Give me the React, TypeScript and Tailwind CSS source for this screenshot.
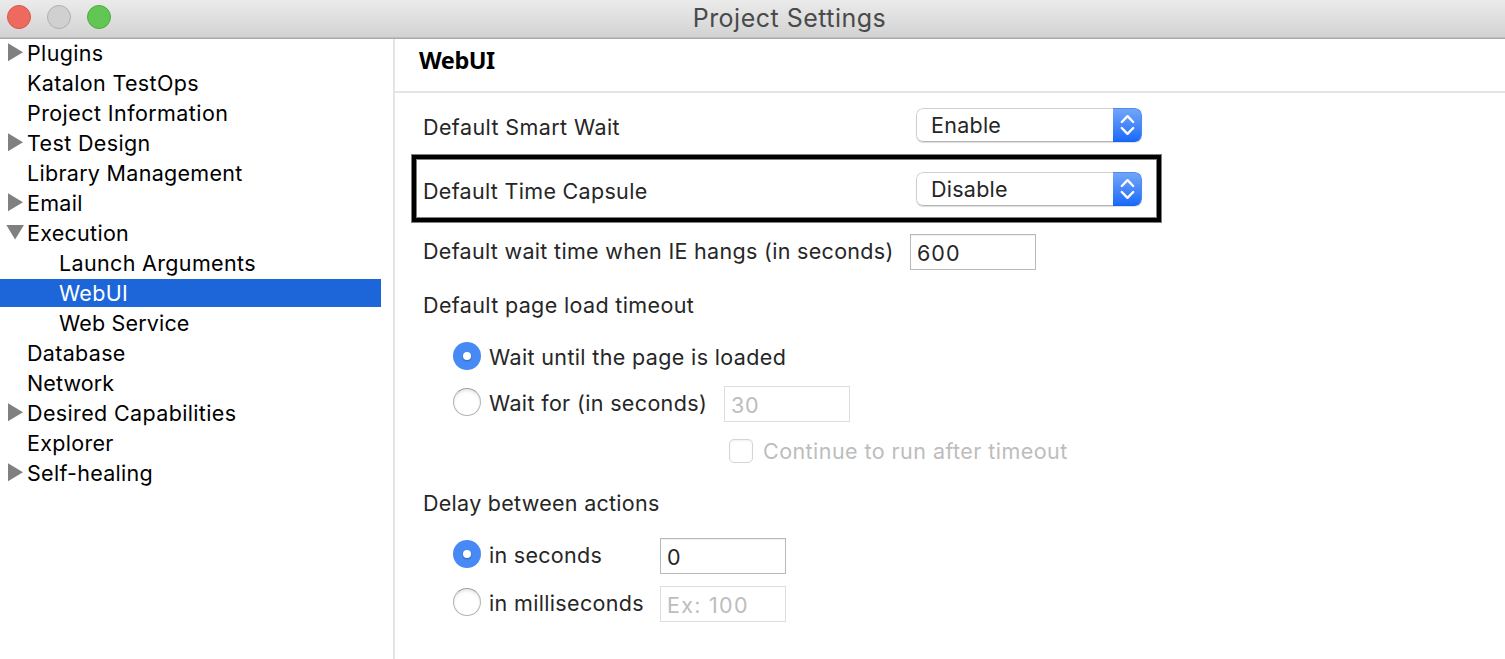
import React from "react";
import clsx from "clsx";

type TreeNode = {
  label: string;
  arrow?: "right" | "down";
  child?: boolean;
  selected?: boolean;
  tracking?: string;
};

const tree: TreeNode[] = [
  { label: "Plugins", arrow: "right", tracking: "tracking-[0.35px]" },
  { label: "Katalon TestOps", tracking: "tracking-[0.35px]" },
  { label: "Project Information", tracking: "tracking-[0.42px]" },
  { label: "Test Design", arrow: "right", tracking: "tracking-[0.36px]" },
  { label: "Library Management", tracking: "tracking-[0.29px]" },
  { label: "Email", arrow: "right" },
  { label: "Execution", arrow: "down", tracking: "tracking-[0.28px]" },
  { label: "Launch Arguments", child: true, tracking: "tracking-[0.34px]" },
  { label: "WebUI", child: true, selected: true },
  { label: "Web Service", child: true, tracking: "tracking-[0.17px]" },
  { label: "Database", tracking: "tracking-[0.32px]" },
  { label: "Network", tracking: "tracking-[0.1px]" },
  { label: "Desired Capabilities", arrow: "right", tracking: "tracking-[0.36px]" },
  { label: "Explorer", tracking: "tracking-[0.3px]" },
  { label: "Self-healing", arrow: "right" },
];

function Arrow({ dir }: { dir?: "right" | "down" }) {
  return (
    <svg className="h-7 w-[27px] shrink-0" viewBox="0 0 27 28" fill="#808080">
      {dir === "right" && <path d="M8 4.2 L23 13.2 L8 22.2 Z" />}
      {dir === "down" && <path d="M6.3 6 H24 L15.1 20.5 Z" />}
    </svg>
  );
}

function TreeRow({ node }: { node: TreeNode }) {
  return (
    <li
      className={clsx(
        "mb-0.5 flex h-7 w-[381px] items-center whitespace-nowrap",
        node.tracking ?? "tracking-[0.28px]",
        node.selected ? "bg-[#1c66da] text-white" : "text-black",
      )}
    >
      <Arrow dir={node.arrow} />
      <span className={clsx(node.child && "ml-8")}>{node.label}</span>
    </li>
  );
}

function Select({ value }: { value: string }) {
  return (
    <div className="flex h-[34px] w-[226px] overflow-hidden rounded-[7px] bg-white shadow-[0_1px_1px_rgba(0,0,0,0.14)]">
      <div className="flex flex-1 items-center rounded-l-[7px] border border-r-0 border-[#cfcfcf] border-b-[#b5b5b5] pl-[14px] tracking-[0.26px]">
        {value}
      </div>
      <div className="w-[29px] rounded-r-[7px] border border-l-0 border-[#4f8af0] border-b-[#1764ef] bg-linear-to-b from-[#72a5f7] to-[#1769fa]">
        <svg className="-mt-px h-[34px] w-[29px]" viewBox="0 0 29 34" fill="none" stroke="white" strokeWidth="2.4" strokeLinecap="round" strokeLinejoin="round">
          <path d="M8.8 14 L14.5 8.2 L20.2 14 M8.8 20 L14.5 25.8 L20.2 20" />
        </svg>
      </div>
    </div>
  );
}

function Field({ value, disabled, className }: { value: string; disabled?: boolean; className?: string }) {
  return (
    <div
      className={clsx(
        "flex h-9 w-[126px] items-center border bg-white pt-[2px] pl-[6px] whitespace-nowrap",
        disabled ? "border-[#dedede] text-[#bdbdbd]" : "border-[#b9b9b9] shadow-[inset_0_1px_0_#f0f0f0]",
        className,
      )}
    >
      {value}
    </div>
  );
}

function Radio({ checked }: { checked?: boolean }) {
  return checked ? (
    <span className="flex size-7 shrink-0 items-center justify-center rounded-full bg-[#478af5]">
      <span className="size-2 rounded-full bg-white shadow-[0_1px_2px_rgba(0,0,0,0.3)]" />
    </span>
  ) : (
    <span className="size-7 shrink-0 rounded-full border border-[#b4b4b4] border-t-[#a0a0a0] bg-white shadow-[inset_0_2px_3px_rgba(0,0,0,0.1)]" />
  );
}

export default function App() {
  return (
    <div className="flex h-[659px] w-[1505px] flex-col overflow-hidden bg-white font-['Inter',sans-serif] text-[21.5px] leading-7 text-[#262626]">
      <header className="relative flex h-[39px] shrink-0 justify-center border-b border-[#a9a9a9] bg-linear-to-b from-[#ebebeb] to-[#d2d2d2] shadow-[inset_0_-1px_0_#c0c0c0]">
        <div className="absolute top-[5px] left-[7px] flex gap-4">
          <span className="size-6 rounded-full border border-[#d8554b] bg-[#ee6a5f]" />
          <span className="size-6 rounded-full border border-[#b0b0b0] bg-[#d0d0d0]" />
          <span className="size-6 rounded-full border border-[#4fa83f] bg-[#62c654]" />
        </div>
        <h1 className="ml-[74px] h-9 text-[25px] leading-9 tracking-[0.49px] text-[#4a4a4a]">Project Settings</h1>
      </header>

      <div className="flex min-h-0 flex-1">
        <ul className="w-[395px] shrink-0 border-r-2 border-[#e4e4e4]">
          {tree.map((node) => (
            <TreeRow key={node.label} node={node} />
          ))}
        </ul>

        <main className="flex-1 whitespace-nowrap">
          <div className="h-[54px] border-b-2 border-[#e4e4e4] pt-[7px] pl-6">
            <h2 className="font-['Noto_Sans',sans-serif] text-[23.5px] leading-7 font-bold tracking-[-0.45px] text-black">WebUI</h2>
          </div>

          <div className="mt-[15px] flex h-[34px] items-center pl-7">
            <span className="w-[493px] pt-1 tracking-[0.41px]">Default Smart Wait</span>
            <Select value="Enable" />
          </div>

          <div className="mt-[13px] ml-[17px] flex h-[67px] w-[749px] border-4 border-black pt-[13px] pl-[7px] shadow-[0_0_0_1px_rgba(0,0,0,0.5),inset_0_0_0_1px_rgba(0,0,0,0.5)]">
            <span className="w-[493px] pt-[5px] tracking-[0.31px]">Default Time Capsule</span>
            <Select value="Disable" />
          </div>

          <div className="mt-3 flex h-9 items-center pl-7">
            <span className="w-[487px] pb-[2px] tracking-[0.31px]">Default wait time when IE hangs (in seconds)</span>
            <Field value="600" className="tracking-[1px]" />
          </div>

          <div className="mt-[21px] pl-7 tracking-[0.36px]">Default page load timeout</div>

          <div className="mt-[23px] flex h-7 items-center gap-2 pl-[58px]">
            <Radio checked />
            <span className="pt-[2px] tracking-[0.36px]">Wait until the page is loaded</span>
          </div>

          <div className="mt-4 flex h-9 pl-[58px]">
            <div className="flex h-8 w-[271px] items-center gap-2">
              <Radio />
              <span className="pt-[2px] tracking-[0.35px]">Wait for (in seconds)</span>
            </div>
            <Field value="30" disabled className="tracking-[0.72px]" />
          </div>

          <div className="mt-[15px] flex h-7 items-center gap-[10px] pl-[334px]">
            <span className="size-6 rounded-[5px] border border-[#d4d4d4] bg-white shadow-[inset_0_1px_2px_rgba(0,0,0,0.06)]" />
            <span className="tracking-[0.44px] text-[#bdbdbd]">Continue to run after timeout</span>
          </div>

          <div className="mt-6 pl-7 tracking-[0.28px]">Delay between actions</div>

          <div className="mt-[21px] flex h-9 pl-[58px]">
            <div className="flex h-8 w-[207px] items-center gap-2">
              <Radio checked />
              <span className="pt-[2px] tracking-[0.29px]">in seconds</span>
            </div>
            <Field value="0" />
          </div>

          <div className="mt-3 flex h-9 pl-[58px]">
            <div className="flex h-8 w-[207px] items-center gap-2">
              <Radio />
              <span className="pt-[2px] tracking-[0.34px]">in milliseconds</span>
            </div>
            <Field value="Ex: 100" disabled className="tracking-[1.28px]" />
          </div>
        </main>
      </div>
    </div>
  );
}
